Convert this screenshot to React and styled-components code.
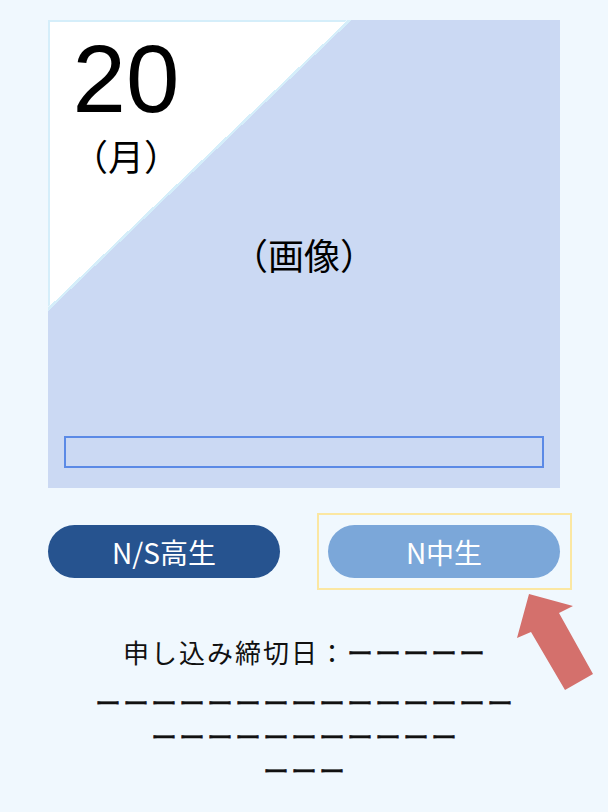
import React from 'react';
import styled, { createGlobalStyle } from 'styled-components';

const GlobalStyle = createGlobalStyle`
  html, body {
    margin: 0;
    padding: 0;
    background: #f0f8fe;
  }
  body {
    font-family: 'Noto Sans CJK JP', 'Noto Sans', sans-serif;
    color: #111;
  }
`;

const Page = styled.div`
  position: relative;
  min-height: 812px;
  padding: 20px 48px 0;
  box-sizing: border-box;
`;

const Card = styled.div`
  position: relative;
  display: grid;
  grid-template-areas: 'stack';
  height: 468px;
  background: linear-gradient(
    136.2deg,
    #ffffff 0,
    #ffffff 30%,
    #d5eefa 30%,
    #d5eefa 30.35%,
    #cbd9f3 30.35%
  );

  &::before {
    content: '';
    grid-area: stack;
    width: 299px;
    height: 287px;
    box-sizing: border-box;
    border-top: 2px solid #d5eefa;
    border-left: 2px solid #d5eefa;
    clip-path: polygon(0 0, 100% 0, 0 100%);
  }
`;

const DateBlock = styled.div`
  grid-area: stack;
  align-self: start;
  justify-self: start;
  display: flex;
  flex-direction: column;
  align-items: center;
  margin: 11px 0 0 24px;
`;

const Day = styled.div`
  font-family: 'Liberation Sans', Arial, sans-serif;
  font-size: 96px;
  line-height: 1;
  color: #000;
`;

const Weekday = styled.div`
  font-size: 36px;
  line-height: 1;
  margin-top: 10px;
  color: #000;
`;

const ImageLabel = styled.div`
  grid-area: stack;
  align-self: center;
  justify-self: center;
  font-size: 36px;
  line-height: 1;
  color: #000;
`;

const CaptionBox = styled.div`
  grid-area: stack;
  align-self: end;
  justify-self: stretch;
  height: 32px;
  margin: 0 16px 20px;
  box-sizing: border-box;
  border: 2px solid #5b8ae6;
`;

const ButtonRow = styled.div`
  display: flex;
  justify-content: space-between;
  align-items: center;
  margin-top: 37px;
`;

const Pill = styled.div`
  width: 232px;
  height: 53px;
  border-radius: 27px;
  display: flex;
  align-items: center;
  justify-content: center;
  font-size: 28px;
  color: #ffffff;
  background: ${({ light }) => (light ? '#7ba7d9' : '#26538f')};
`;

const Highlight = styled.div`
  margin: -12px -12px -12px 0;
  padding: 10px 10px 10px 9px;
  border: 2px solid #fbe7a2;
`;

const Info = styled.div`
  margin-top: 57px;
  text-align: center;
  font-size: 26px;
  letter-spacing: 2px;
  padding-left: 2px;
  line-height: 34px;
`;

const Line = styled.p`
  margin: ${({ first }) => (first ? '0 0 16px' : '0')};
`;

const Dash = styled.span`
  -webkit-text-stroke: 0.6px #111;
`;

const Arrow = styled.svg`
  position: absolute;
  left: 515px;
  top: 592px;
`;

const App = () => (
  <Page>
    <GlobalStyle />
    <Card>
      <DateBlock>
        <Day>20</Day>
        <Weekday>（月）</Weekday>
      </DateBlock>
      <ImageLabel>（画像）</ImageLabel>
      <CaptionBox />
    </Card>
    <ButtonRow>
      <Pill>N/S高生</Pill>
      <Highlight>
        <Pill light>N中生</Pill>
      </Highlight>
    </ButtonRow>
    <Info>
      <Line first>
        申し込み締切日：<Dash>ーーーーー</Dash>
      </Line>
      <Line>
        <Dash>
          ーーーーーーーーーーーーーーー
          <br />
          ーーーーーーーーーーー
          <br />
          ーーー
        </Dash>
      </Line>
    </Info>
    <Arrow width="82" height="102" viewBox="0 0 82 102">
      <polygon
        points="14,2 58,14 44,21 78,82 50,98 16,40 2,46"
        fill="#d4706c"
      />
    </Arrow>
  </Page>
);

export default App;
